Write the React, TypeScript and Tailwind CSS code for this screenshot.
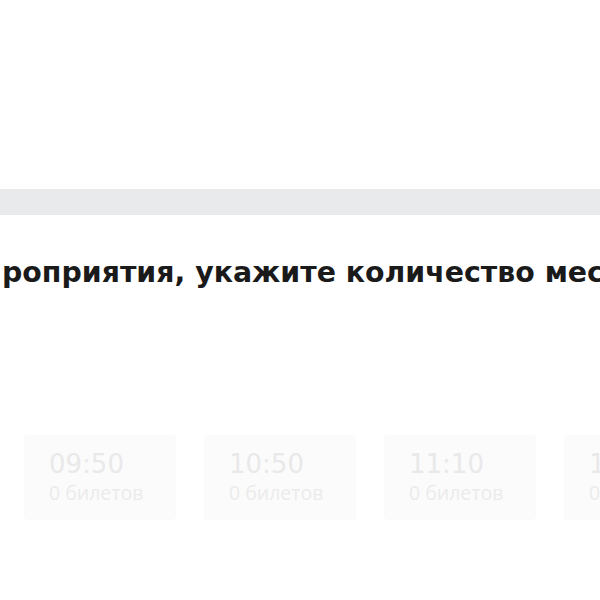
import React from "react";

const slots = [
  { time: "09:50", tickets: "0 билетов" },
  { time: "10:50", tickets: "0 билетов" },
  { time: "11:10", tickets: "0 билетов" },
  { time: "12:10", tickets: "0 билетов" },
];

export default function App() {
  return (
    <div className="w-[600px] h-[600px] bg-white overflow-hidden">
      <div className="h-[189px]" />
      <div className="h-[26px] bg-[#e9eaec]" />
      <div className="pt-[41px] pl-[2px] whitespace-nowrap text-[28.4px] leading-[34px] font-bold text-[#1a1a1a] [font-family:'DejaVu_Sans',sans-serif]">
        роприятия, укажите количество мест
      </div>
      <div className="mt-[145px] pl-6 flex gap-7">
        {slots.map((s) => (
          <div
            key={s.time}
            className="shrink-0 w-[152px] h-[85px] rounded bg-[#fbfbfb] pl-[25px] pt-[14px]"
          >
            <div className="text-[26px] leading-[31px] text-[#e9e9ea] [font-family:'DejaVu_Sans',sans-serif]">
              {s.time}
            </div>
            <div className="text-[19.5px] leading-[25px] text-[#ebebeb] [font-family:'Open_Sans',sans-serif]">
              {s.tickets}
            </div>
          </div>
        ))}
      </div>
    </div>
  );
}
